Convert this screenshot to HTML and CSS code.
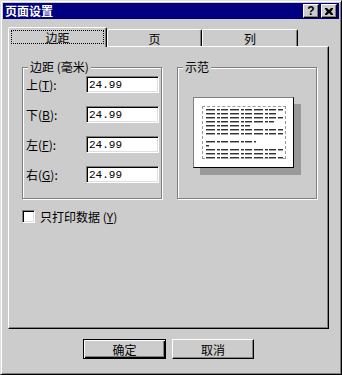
FILE: index.html
```html
<!DOCTYPE html>
<html lang="zh-CN">
<head>
    <meta charset="UTF-8">
    <meta name="viewport" content="width=device-width, initial-scale=1.0">
    <title>页面设置</title>
    <link rel="stylesheet" href="styles.css">
</head>
<body>
    <div class="window">
        <div class="titlebar">
            <span class="title">页面设置</span>
            <div class="title-btns">
                <span class="tbtn">?</span>
                <span class="tbtn">
                    <svg width="8" height="7" viewBox="0 0 8 7"><path d="M0 0h2l2 2 2-2h2v1L6 3.5 8 6v1H6L4 5 2 7H0V6l2-2.5L0 1z" fill="#000"/></svg>
                </span>
            </div>
        </div>

        <div class="tabs">
            <div class="tab active"><span class="focus">边距</span></div>
            <div class="tab">页</div>
            <div class="tab">列</div>
        </div>

        <div class="panel">
            <div class="groups">
                <div class="group margins">
                    <div class="group-title">边距 (毫米)</div>
                    <div class="fields">
                        <div class="field"><label>上(<u>T</u>):</label><input type="text" value="24.99"></div>
                        <div class="field"><label>下(<u>B</u>):</label><input type="text" value="24.99"></div>
                        <div class="field"><label>左(<u>F</u>):</label><input type="text" value="24.99"></div>
                        <div class="field"><label>右(<u>G</u>):</label><input type="text" value="24.99"></div>
                    </div>
                </div>
                <div class="group sample">
                    <div class="group-title">示范</div>
                    <!-- little page preview -->
                    <div class="page">
                        <div class="area">
                            <div class="line w1"></div>
                            <div class="line w2"></div>
                            <div class="line w1"></div>
                            <div class="line w3"></div>
                            <div class="line w4"></div>
                            <div class="line w1"></div>
                            <div class="line w1"></div>
                            <div class="line blank"></div>
                            <div class="line w5"></div>
                            <div class="line w6"></div>
                            <div class="line w1"></div>
                            <div class="line w2"></div>
                            <div class="line w1"></div>
                        </div>
                    </div>
                </div>
            </div>
            <label class="check"><span class="box"></span><span>只打印数据 (<u>Y</u>)</span></label>
        </div>

        <div class="buttons">
            <button class="btn default">确定</button>
            <button class="btn">取消</button>
        </div>
    </div>
</body>
</html>
```

FILE: styles.css
```css
* {
    box-sizing: border-box;
}
body {
    margin: 0;
    font-family: "Noto Sans CJK SC", sans-serif;
    font-size: 12px;
    color: #000;
}
.window {
    width: 342px;
    height: 375px;
    background: #cccccc;
    border: 1px solid;
    border-color: #dfdfdf #000 #000 #dfdfdf;
    box-shadow: inset 1px 1px #fff, inset -1px -1px #808080;
    padding: 2px;
}

/* title bar */
.titlebar {
    height: 16px;
    background: #000080;
    display: flex;
    align-items: center;
    justify-content: space-between;
    padding: 0 2px;
}
.title {
    color: #fff;
    font-weight: bold;
    font-size: 12px;
    line-height: 16px;
}
.title-btns {
    display: flex;
    gap: 2px;
}
.tbtn {
    width: 16px;
    height: 14px;
    background: #cccccc;
    border: 1px solid;
    border-color: #fff #000 #000 #fff;
    box-shadow: inset -1px -1px #808080;
    display: flex;
    align-items: center;
    justify-content: center;
    font: bold 12px "Liberation Sans", sans-serif;
    line-height: 1;
}

/* tabs */
.tabs {
    display: flex;
    align-items: flex-end;
    height: 19px;
    margin: 8px 0 0 5px;
    position: relative;
    z-index: 1;
}
.tab {
    height: 17px;
    background: #cccccc;
    border: 1px solid;
    border-bottom: none;
    border-color: #fff #000 transparent #fff;
    box-shadow: inset -1px 0 #808080;
    border-radius: 2px 2px 0 0;
    display: flex;
    align-items: center;
    justify-content: center;
    width: 95px;
}
.tab:last-child {
    width: 96px;
}
.tab.active {
    width: 99px;
    height: 20px;
    margin-bottom: -1px;
    align-items: flex-start;
    padding: 2px 2px 0 2px;
}
.focus {
    flex: 1;
    height: 14px;
    border: 1px dotted #000;
    display: flex;
    align-items: center;
    justify-content: center;
}

/* panel */
.panel {
    margin-left: 5px;
    width: 321px;
    height: 283px;
    border: 1px solid;
    border-color: #fff #000 #000 #fff;
    box-shadow: inset -1px -1px #808080;
    padding: 20px 0 0 13px;
}
.groups {
    display: flex;
    gap: 15px;
}
.group {
    width: 140px;
    height: 132px;
    border: 1px solid #808080;
    box-shadow: 1px 1px #fff, inset 1px 1px #fff;
}
.group-title {
    width: fit-content;
    margin: -9px 0 0 5px;
    padding: 0 2px;
    background: #cccccc;
    line-height: 16px;
}
.fields {
    display: flex;
    flex-direction: column;
    gap: 13px;
    margin-top: 1px;
    padding-left: 3px;
}
.field {
    display: flex;
    align-items: center;
    height: 17px;
}
.field label {
    width: 60px;
}
.field input {
    width: 73px;
    height: 17px;
    margin: 0;
    padding: 0 2px;
    border: 1px solid;
    border-color: #808080 #fff #fff #808080;
    box-shadow: inset 1px 1px #000, inset -1px -1px #dfdfdf;
    background: #fff;
    font: 11px "Liberation Mono", monospace;
    color: #000;
    outline: none;
}

/* preview page */
.page {
    width: 101px;
    height: 71px;
    margin: 22px 0 0 15px;
    background: #fff;
    border: 1px solid;
    border-color: #808080 #000 #000 #808080;
    box-shadow: 7px 7px 0 #999;
    padding: 8px 7px 8px 8px;
}
.area {
    height: 100%;
    border: 1px dashed #999;
    padding: 2px 2px 0 3px;
    display: flex;
    flex-direction: column;
    gap: 2px;
}
.line {
    height: 2px;
    flex: none;
    background:
        repeating-linear-gradient(0deg, rgba(255,255,255,0.55) 0 1px, transparent 1px 2px),
        repeating-linear-gradient(90deg, #333 0 9px, transparent 9px 11px, #333 11px 14px, transparent 14px 15px, #333 15px 22px, transparent 22px 24px);
}
.line.blank { background: none; }
.w1 { width: 77px; }
.w2 { width: 72px; }
.w3 { width: 68px; }
.w4 { width: 44px; }
.w5 { width: 50px; }
.w6 { width: 3px; }

/* checkbox */
.check {
    display: flex;
    align-items: center;
    gap: 5px;
    margin-top: 11px;
    height: 13px;
}
.box {
    width: 13px;
    height: 13px;
    background: #fff;
    border: 1px solid;
    border-color: #808080 #fff #fff #808080;
    box-shadow: inset 1px 1px #000, inset -1px -1px #dfdfdf;
}

/* dialog buttons */
.buttons {
    display: flex;
    gap: 6px;
    margin-top: 10px;
    padding-left: 80px;
}
.btn {
    width: 82px;
    height: 20px;
    padding: 0;
    background: #cccccc;
    border: 1px solid;
    border-color: #fff #000 #000 #fff;
    box-shadow: inset -1px -1px #808080;
    font: 12px "Noto Sans CJK SC", sans-serif;
    color: #000;
}
.btn.default {
    width: 83px;
    border-color: #000;
    box-shadow: inset 1px 1px #fff, inset -1px -1px #000, inset -2px -2px #808080;
}
```
